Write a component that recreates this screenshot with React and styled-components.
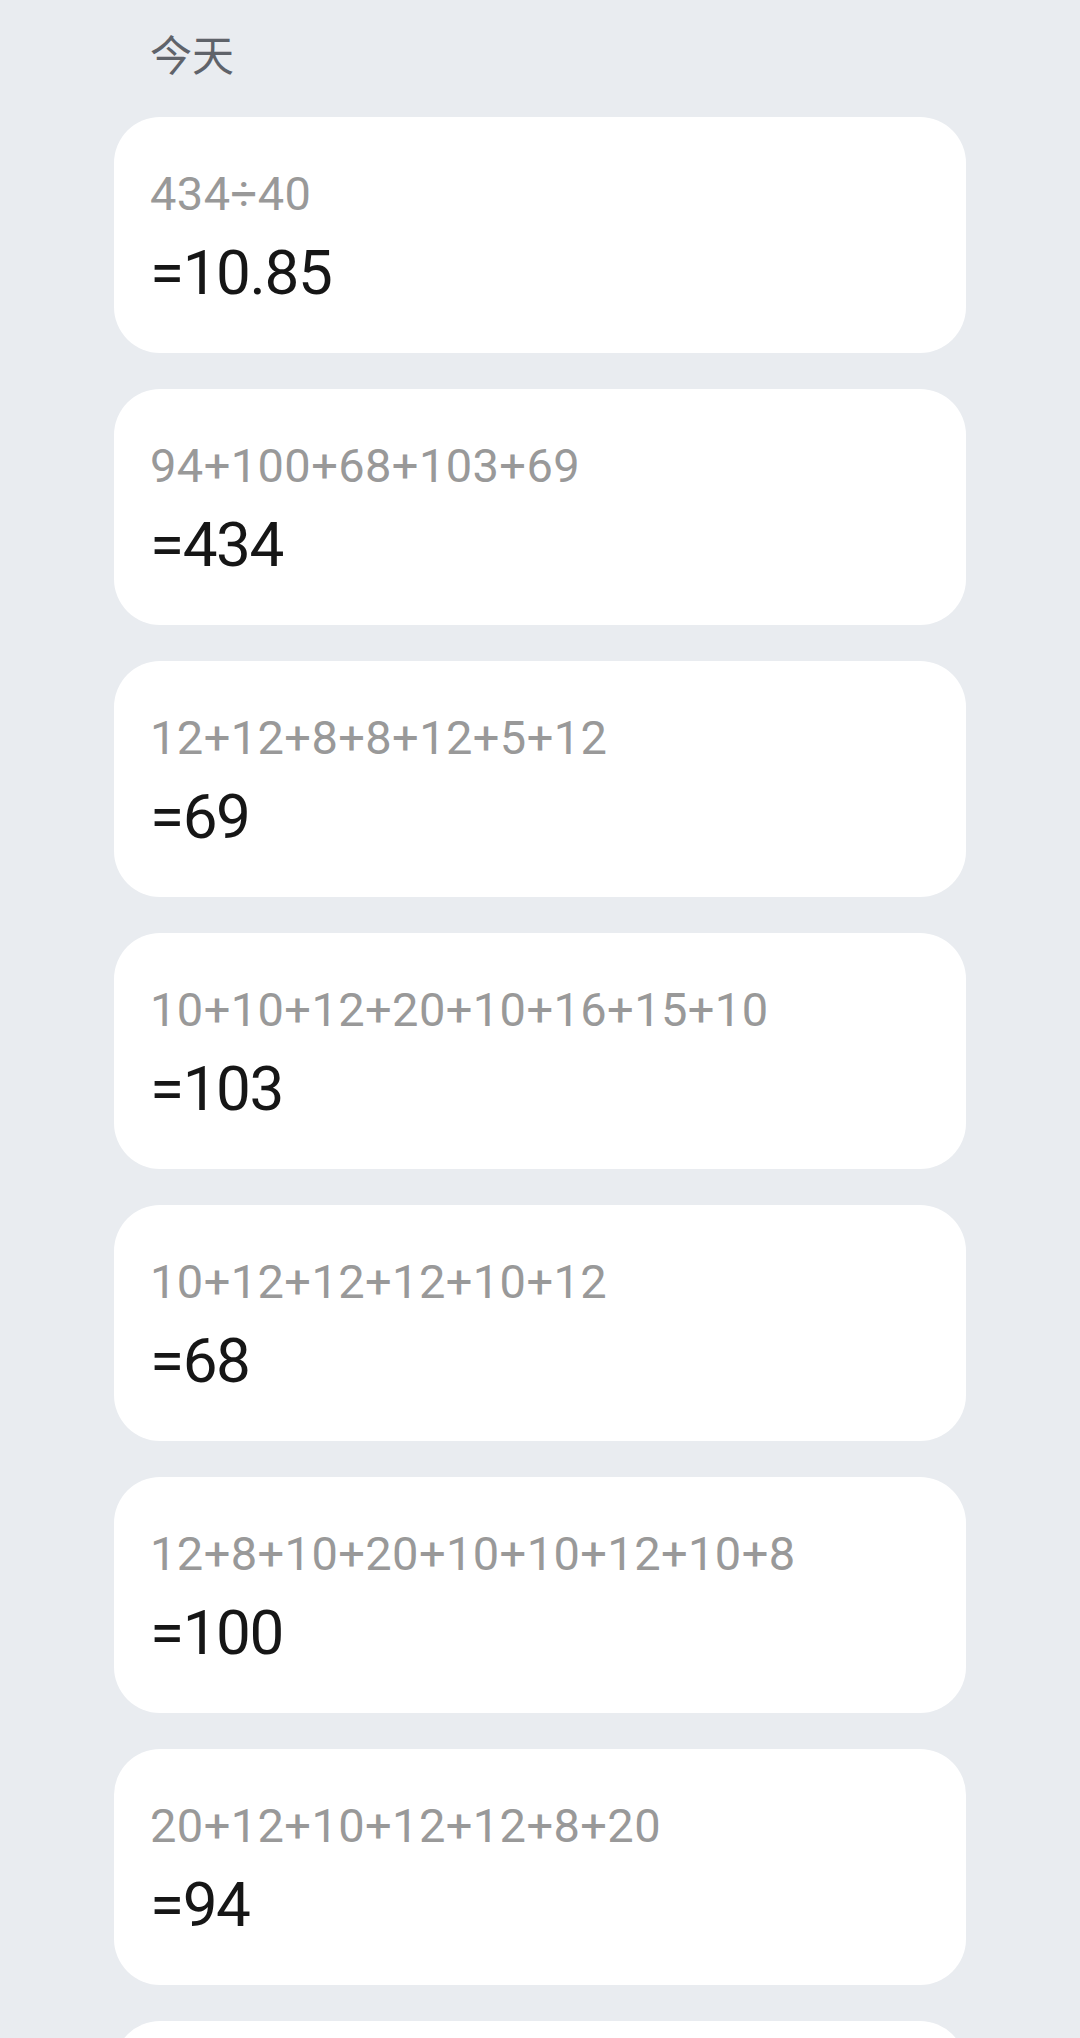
import React from "react";
import styled, { createGlobalStyle } from "styled-components";

const GlobalStyle = createGlobalStyle`
  html, body {
    margin: 0;
    padding: 0;
    background: #e9ecf0;
  }
  body {
    font-family: Roboto, "Noto Sans", "Noto Sans CJK SC", sans-serif;
  }
`;

const Page = styled.main`
  min-height: 2038px;
  background: #e9ecf0;
  padding: 0 114px 40px;
  box-sizing: border-box;
`;

const DayTitle = styled.h2`
  margin: 0;
  padding: 28px 0 39px 36px;
  font-family: "Noto Sans CJK SC", "Noto Sans", sans-serif;
  font-weight: 400;
  font-size: 42px;
  line-height: 50px;
  color: #5f636a;
`;

const List = styled.ul`
  list-style: none;
  margin: 0;
  padding: 0;
  display: flex;
  flex-direction: column;
  gap: 36px;
`;

const Card = styled.li`
  background: #ffffff;
  border-radius: 46px;
  padding: 49px 36px 44px;
  display: flex;
  flex-direction: column;
  gap: 15px;
`;

const Expression = styled.div`
  font-size: 47px;
  line-height: 56px;
  letter-spacing: 0.4px;
  color: #999999;
  white-space: nowrap;
`;

const Result = styled.div`
  font-size: 62px;
  line-height: 72px;
  letter-spacing: -1.4px;
  color: #161616;
`;

const history = [
  { expr: "434÷40", result: "10.85" },
  { expr: "94+100+68+103+69", result: "434" },
  { expr: "12+12+8+8+12+5+12", result: "69" },
  { expr: "10+10+12+20+10+16+15+10", result: "103" },
  { expr: "10+12+12+12+10+12", result: "68" },
  { expr: "12+8+10+20+10+10+12+10+8", result: "100" },
  { expr: "20+12+10+12+12+8+20", result: "94" },
  { expr: "8+10+12+10", result: "40" },
];

export default function App() {
  return (
    <>
      <GlobalStyle />
      <Page>
        <DayTitle>今天</DayTitle>
        <List>
          {history.map((item, i) => (
            <Card key={i}>
              <Expression>{item.expr}</Expression>
              <Result>={item.result}</Result>
            </Card>
          ))}
        </List>
      </Page>
    </>
  );
}
